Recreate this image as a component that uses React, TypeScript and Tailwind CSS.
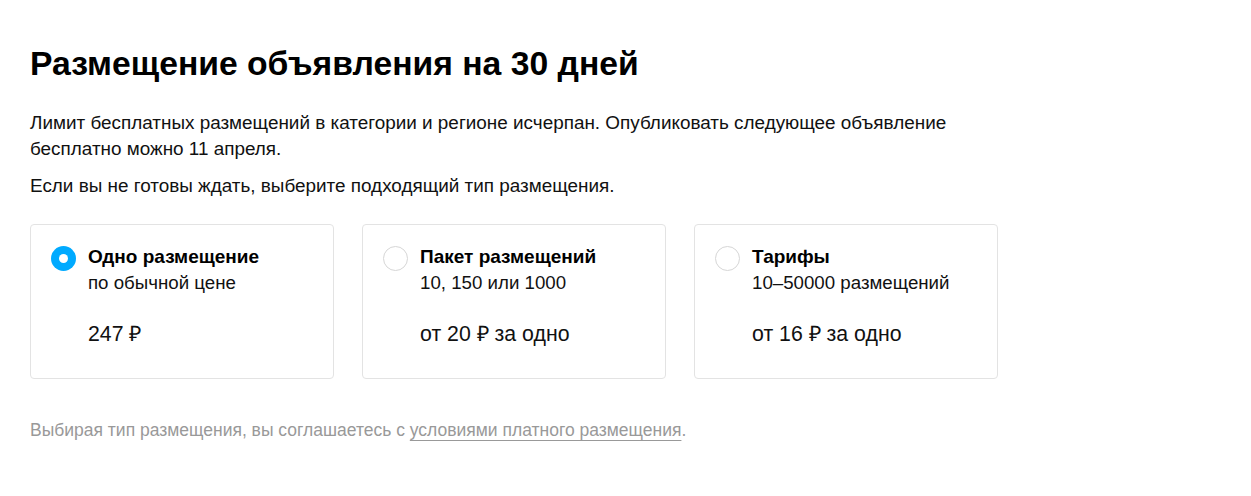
import React from "react";

type Opt = { title: string; sub: string; price: string; checked?: boolean };

const opts: Opt[] = [
  { title: "Одно размещение", sub: "по обычной цене", price: "247 ₽", checked: true },
  { title: "Пакет размещений", sub: "10, 150 или 1000", price: "от 20 ₽ за одно" },
  { title: "Тарифы", sub: "10–50000 размещений", price: "от 16 ₽ за одно" },
];

function Radio({ checked }: { checked?: boolean }) {
  if (checked) {
    return (
      <div className="w-[25px] h-[25px] rounded-full bg-[#00aaff] flex items-center justify-center shrink-0">
        <div className="w-[9px] h-[9px] rounded-full bg-white" />
      </div>
    );
  }
  return <div className="w-[25px] h-[25px] rounded-full border border-[#d6d6d6] bg-white shrink-0" />;
}

export default function App() {
  return (
    <div
      className="bg-white min-h-[496px] pl-[30px] pt-[43px] text-black"
      style={{ fontFamily: '"Liberation Sans", Arial, sans-serif' }}
    >
      <h1 className="text-[33.7px] leading-[40px] font-bold">Размещение объявления на 30 дней</h1>
      <p className="mt-[27px] text-[18.9px] leading-[26px] max-w-[940px] text-[#111]">
        Лимит бесплатных размещений в категории и регионе исчерпан. Опубликовать следующее объявление бесплатно можно 11 апреля.
      </p>
      <p className="mt-[11px] text-[18.9px] leading-[26px] text-[#111]">
        Если вы не готовы ждать, выберите подходящий тип размещения.
      </p>
      <div className="mt-[25px] flex gap-[28px]">
        {opts.map((o) => (
          <div
            key={o.title}
            className="w-[304px] h-[155px] border border-[#e3e3e3] rounded-[4px] pl-[20px] pt-[21px] flex gap-[12px]"
          >
            <Radio checked={o.checked} />
            <div className="flex flex-col">
              <div className="text-[19px] leading-[22px] font-bold">{o.title}</div>
              <div className="text-[18.7px] leading-[26px] text-[#111] mt-[2px]">{o.sub}</div>
              <div className="mt-[25px] text-[21.3px] leading-[26px] text-[#111]">{o.price}</div>
            </div>
          </div>
        ))}
      </div>
      <p className="mt-[39px] text-[17.5px] leading-[24px] text-[#999]">
        Выбирая тип размещения, вы соглашаетесь с{" "}
        <span className="underline decoration-[#999] underline-offset-[4px]">условиями платного размещения</span>.
      </p>
    </div>
  );
}
